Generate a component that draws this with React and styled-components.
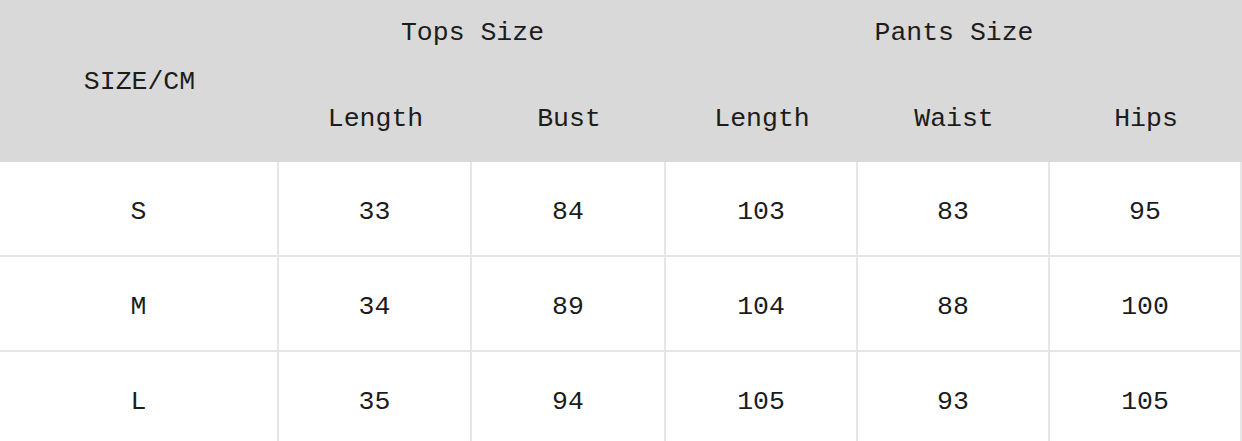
import React from 'react';
import styled, { createGlobalStyle } from 'styled-components';

const GlobalStyle = createGlobalStyle`
  body {
    margin: 0;
    background: #ffffff;
  }
`;

const Table = styled.table`
  width: 1242px;
  table-layout: fixed;
  border-collapse: separate;
  border-spacing: 0;
  font-family: "Liberation Mono", "DejaVu Sans Mono", monospace;
  font-size: 26.5px;
  line-height: 1.1;
  color: #1c1c1c;
`;

const Head = styled.thead`
  background: #d9d9d9;
`;

const HeadCell = styled.th`
  box-sizing: border-box;
  font-weight: normal;
  text-align: center;
  padding: 0;
  height: ${(p) => p.$h}px;
  vertical-align: middle;
  padding-top: ${(p) => p.$pt || 0}px;
`;

const Cell = styled.td`
  box-sizing: border-box;
  text-align: center;
  padding: 9px 0 0 0;
  height: 95px;
  border-right: 2px solid #e6e6e6;
  border-bottom: 2px solid #e6e6e6;
`;

const columns = [279, 193, 194, 192, 192, 192];

const rows = [
  ['S', '33', '84', '103', '83', '95'],
  ['M', '34', '89', '104', '88', '100'],
  ['L', '35', '94', '105', '93', '105'],
];

const App = () => {
  return (
    <>
      <GlobalStyle />
      <Table>
        <colgroup>
          {columns.map((w, i) => (
            <col key={i} style={{ width: w }} />
          ))}
        </colgroup>
        <Head>
          <tr>
            <HeadCell rowSpan={2} $h={162} $pt={4}>SIZE/CM</HeadCell>
            <HeadCell colSpan={2} $h={66} $pt={2}>Tops Size</HeadCell>
            <HeadCell colSpan={3} $h={66} $pt={2}>Pants Size</HeadCell>
          </tr>
          <tr>
            <HeadCell $h={96} $pt={11}>Length</HeadCell>
            <HeadCell $h={96} $pt={11}>Bust</HeadCell>
            <HeadCell $h={96} $pt={11}>Length</HeadCell>
            <HeadCell $h={96} $pt={11}>Waist</HeadCell>
            <HeadCell $h={96} $pt={11}>Hips</HeadCell>
          </tr>
        </Head>
        <tbody>
          {rows.map((r) => (
            <tr key={r[0]}>
              {r.map((v, i) => (
                <Cell key={i}>{v}</Cell>
              ))}
            </tr>
          ))}
        </tbody>
      </Table>
    </>
  );
};

export default App;
